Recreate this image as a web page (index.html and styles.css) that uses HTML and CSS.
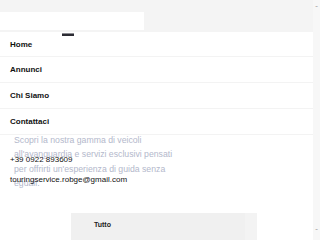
FILE: index.html
```html
<!DOCTYPE html>
<html lang="it">
<head>
    <meta charset="UTF-8">
    <meta name="viewport" content="width=device-width, initial-scale=1.0">
    <title>Touring Service</title>
    <link rel="stylesheet" href="styles.css">
</head>
<body>
    <div class="page">
        <header class="topbar">
            <div class="search"></div>
        </header>

        <main class="content">
            <p class="hero-text">Scopri la nostra gamma di veicoli all'avanguardia e servizi esclusivi pensati per offrirti un'esperienza di guida senza eguali.</p>
            <div class="filters">
                <span class="filter-label">Tutto</span>
                <span class="filter-end"></span>
            </div>
        </main>

        <nav class="menu">
            <span class="menu-tab"></span>
            <ul class="menu-list">
                <li><a href="#">Home</a></li>
                <li><a href="#">Annunci</a></li>
                <li><a href="#">Chi Siamo</a></li>
                <li><a href="#">Contattaci</a></li>
            </ul>
            <div class="contact">
                <div class="contact-line">+39 0922 893609</div>
                <div class="contact-line">touringservice.robge@gmail.com</div>
            </div>
        </nav>
    </div>
    <div class="scrollbar">
        <span class="scroll-up">&#710;</span>
        <span class="scroll-down">&#711;</span>
    </div>
</body>
</html>
```

FILE: styles.css
```css
body {
    margin: 0;
    padding: 0;
    font-family: "Liberation Sans", Arial, sans-serif;
    background: #fff;
    display: flex;
    height: 240px;
    overflow: hidden;
}

.page {
    position: relative;
    flex: 1;
    height: 240px;
    overflow: hidden;
}

.topbar {
    height: 32px;
    background: #f4f4f4;
    padding-top: 12px;
    box-sizing: border-box;
}

.search {
    width: 144px;
    height: 18px;
    background: #fff;
}

.content {
    padding-top: 101px;
}

.hero-text {
    margin: 0 0 0 14px;
    width: 162px;
    font-size: 8.7px;
    line-height: 14.3px;
    color: #b3b8cb;
}

.filters {
    display: flex;
    margin: 23px 0 0 71px;
    width: 186px;
    height: 30px;
    background: #f0f0f0;
}

.filter-label {
    flex: 1;
    padding: 8px 0 0 23px;
    font-size: 7px;
    font-weight: bold;
    color: #222;
}

.filter-end {
    width: 12px;
    background: #f3f3f3;
}

/* dropdown menu over the page */
.menu {
    position: absolute;
    top: 32px;
    left: 0;
    right: 0;
}

.menu-tab {
    position: absolute;
    top: 1px;
    left: 62px;
    width: 12px;
    height: 3px;
    background: #2b2b33;
    border-top: 1px solid #8a8a90;
    box-sizing: border-box;
}

.menu-list {
    list-style: none;
    margin: 0;
    padding: 0;
    background: #fff;
}

.menu-list li {
    height: 26px;
    border-bottom: 1px solid #f3f3f3;
    box-sizing: border-box;
}

.menu-list li:first-child {
    height: 25px;
}

.menu-list a {
    display: block;
    padding: 0 10px;
    line-height: 25px;
    font-size: 8px;
    font-weight: bold;
    color: #111;
    text-decoration: none;
}

.contact {
    padding: 20px 0 0 10px;
}

.contact-line {
    font-size: 8px;
    line-height: 10px;
    color: #111;
    margin-bottom: 10px;
}

.scrollbar {
    width: 7px;
    height: 240px;
    background: #f7f7f7;
    display: flex;
    flex-direction: column;
    justify-content: space-between;
    align-items: center;
    font-size: 8px;
    color: #999;
}

.scroll-up {
    margin-top: 4px;
}

.scroll-down {
    margin-bottom: 4px;
}
```
